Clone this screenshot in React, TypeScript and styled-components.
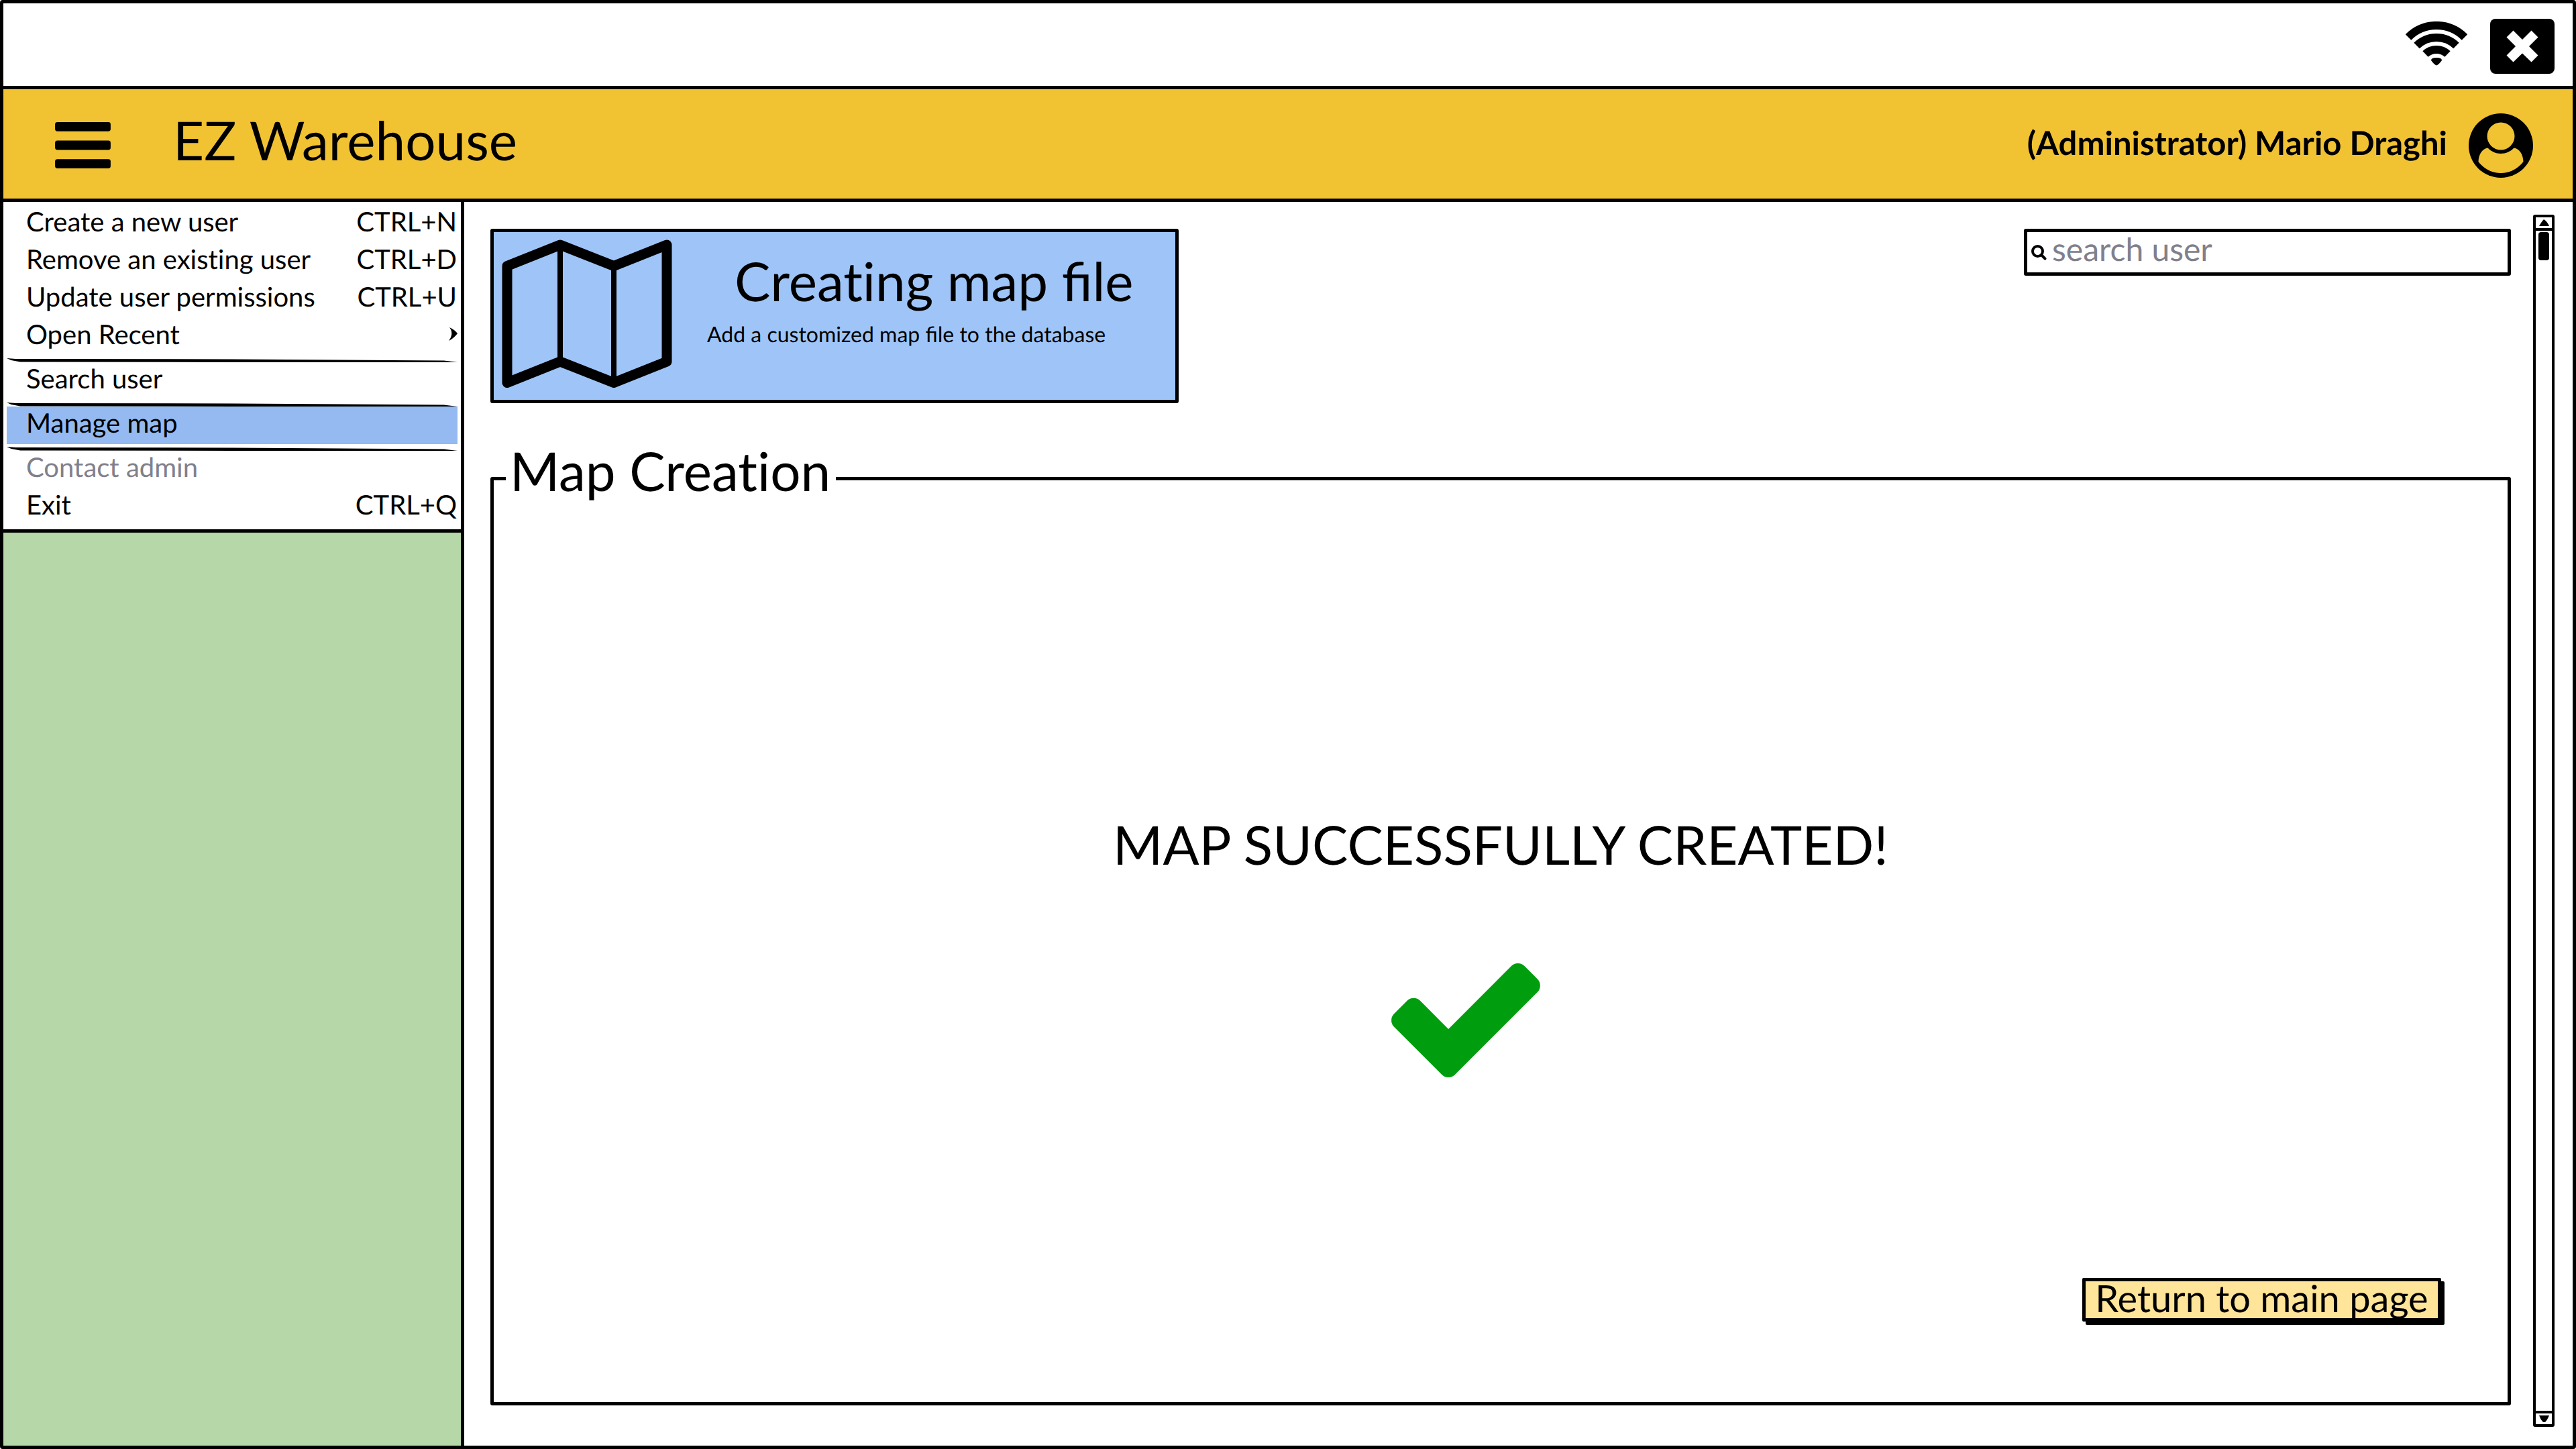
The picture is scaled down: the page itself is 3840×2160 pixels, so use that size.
import React from "react";
import styled, { createGlobalStyle } from "styled-components";

const INK = "#000000";

const GlobalStyle = createGlobalStyle`
  *, *::before, *::after { box-sizing: border-box; }
  body { margin: 0; background: #ffffff; }
  body, button, input {
    font-family: Lato, "Open Sans", sans-serif;
    font-variant-ligatures: no-common-ligatures;
    text-rendering: geometricPrecision;
    color: ${INK};
  }
`;

const Frame = styled.div`
  display: flex;
  flex-direction: column;
  min-height: 100vh;
  border: 5px solid ${INK};
  border-radius: 4px;
`;

const TitleBar = styled.div`
  display: flex;
  align-items: center;
  justify-content: flex-end;
  gap: 34px;
  height: 128px;
  padding: 4px 27px 0 0;
  border-bottom: 5px solid ${INK};
`;

const IconButton = styled.button`
  display: flex;
  padding: 0;
  border: 0;
  background: none;
  cursor: pointer;
`;

const Header = styled.header`
  display: flex;
  align-items: center;
  height: 168px;
  padding: 4px 59px 0 77px;
  background: #f1c232;
  border-bottom: 5px solid ${INK};
`;

const Brand = styled.h1`
  flex: 1;
  margin: 0;
  padding: 0 0 16px 93px;
  font-size: 80px;
  line-height: 96px;
  font-weight: 400;
`;

const Account = styled.div`
  display: flex;
  align-items: center;
  gap: 32px;
`;

const AccountName = styled.span`
  padding-bottom: 8px;
  font-size: 49px;
  line-height: 58px;
  font-weight: 700;
`;

const Columns = styled.div`
  display: flex;
  flex: 1;
`;

const Sidebar = styled.aside`
  flex: none;
  width: 687px;
  background: #b6d7a8;
  border-right: 5px solid ${INK};
`;

const Menu = styled.nav`
  display: flex;
  flex-direction: column;
  padding: 5px;
  background: #ffffff;
  border-bottom: 5px solid ${INK};
`;

const MenuItem = styled.button<{ $active?: boolean }>`
  display: flex;
  justify-content: space-between;
  align-items: center;
  height: 56px;
  padding: 0 0 8px 29px;
  border: 0;
  background: ${(p) => (p.$active ? "#94baf1" : "transparent")};
  font-size: 40px;
  line-height: 48px;
  text-align: left;
  cursor: pointer;

  &:disabled {
    color: #80808c;
    cursor: default;
  }
`;

const Shortcut = styled.span`
  padding-right: 1px;
`;

const Divider = styled.hr`
  width: 100%;
  height: 10px;
  margin: 0;
  border: 0;
  background: ${INK};
  clip-path: polygon(0 40%, 2% 50%, 50% 55%, 97% 75%, 100% 100%, 97% 100%, 50% 100%, 3% 95%, 1% 70%);
`;

const Main = styled.main`
  display: flex;
  flex: 1;
  flex-direction: column;
  padding: 40px 33px 60px 39px;
`;

const TopRow = styled.div`
  display: flex;
  justify-content: space-between;
  align-items: flex-start;
`;

const Card = styled.section`
  display: flex;
  width: 1026px;
  height: 260px;
  padding: 11px 12px;
  background: #9fc5f8;
  border: 5px solid ${INK};
  border-radius: 3px;
`;

const CardText = styled.div`
  flex: 1;
  padding: 14px 0 0 52px;
`;

const CardTitle = styled.h2`
  margin: 0;
  padding-left: 41px;
  font-size: 80px;
  line-height: 96px;
  font-weight: 400;
`;

const CardNote = styled.p`
  margin: 12px 0 0;
  font-size: 32px;
  line-height: 38px;
`;

const Joined = styled.span`
  font-variant-ligatures: common-ligatures;
`;

const SearchBox = styled.label`
  display: flex;
  align-items: center;
  gap: 8px;
  width: 726px;
  height: 70px;
  padding-left: 6px;
  border: 5px solid ${INK};
  border-radius: 3px;
`;

const SearchInput = styled.input`
  flex: 1;
  min-width: 0;
  height: 58px;
  padding: 0 0 8px;
  border: 0;
  outline: 0;
  background: none;
  font-size: 48px;
  line-height: 58px;

  &::placeholder {
    color: #80808c;
    opacity: 1;
  }
`;

const Panel = styled.fieldset`
  display: flex;
  flex: 1;
  flex-direction: column;
  min-width: 0;
  margin: 53px 0 0;
  padding: 0 99px 120px 18px;
  border: 5px solid ${INK};
  border-radius: 3px;
`;

const PanelTitle = styled.legend`
  padding: 0 8px 22px 6px;
  font-size: 80px;
  line-height: 96px;
`;

const Result = styled.div`
  display: flex;
  flex: 1;
  flex-direction: column;
  align-items: center;
  justify-content: center;
  gap: 129px;
  padding: 140px 0 0 81px;
`;

const Message = styled.p`
  margin: 0;
  font-size: 80px;
  line-height: 96px;
`;

const CheckIcon = styled.svg`
  margin-right: 104px;
  fill: #009e0f;
`;

const ReturnButton = styled.button`
  align-self: flex-end;
  width: 535px;
  height: 65px;
  padding: 0 0 6px;
  background: #ffe599;
  border: 5px solid ${INK};
  border-radius: 2px;
  box-shadow: 5px 5px 0 ${INK};
  font-size: 56px;
  line-height: 48px;
  white-space: nowrap;
  cursor: pointer;
`;

const ScrollTrack = styled.div`
  display: flex;
  flex: none;
  flex-direction: column;
  width: 32px;
  margin: 19px 27px 28px 0;
  border: 4px solid ${INK};
  border-radius: 3px;
`;

const ScrollArrow = styled.button<{ $end?: boolean }>`
  display: flex;
  align-items: center;
  justify-content: center;
  height: 20px;
  padding: 0;
  border: 0 solid ${INK};
  border-width: ${(p) => (p.$end ? "4px 0 0" : "0 0 4px")};
  background: #ffffff;
`;

const ScrollSpace = styled.div`
  flex: 1;
  padding: 2px 4px;
`;

const ScrollThumb = styled.div`
  height: 42px;
  border-radius: 4px;
  background: ${INK};
`;

type Entry = { label: string; keys?: string; more?: boolean; active?: boolean; disabled?: boolean };

const GROUPS: Entry[][] = [
  [
    { label: "Create a new user", keys: "CTRL+N" },
    { label: "Remove an existing user", keys: "CTRL+D" },
    { label: "Update user permissions", keys: "CTRL+U" },
    { label: "Open Recent", more: true },
  ],
  [{ label: "Search user" }],
  [{ label: "Manage map", active: true }],
  [
    { label: "Contact admin", disabled: true },
    { label: "Exit", keys: "CTRL+Q" },
  ],
];

export default function App() {
  return (
    <>
      <GlobalStyle />
      <Frame>
        <TitleBar>
          <svg width="92" height="74" viewBox="0 0 92 74" aria-label="Wi-Fi" role="img">
            <g fill="none" stroke={INK} strokeWidth="12">
              <path d="M4 23.500A59 59 0 0 1 88 23.500" />
              <path d="M16.500 36A42 42 0 0 1 75.500 36" />
              <path d="M29.500 48.500A24 24 0 0 1 62.500 48.500" />
            </g>
            <path d="M46 65.500Q43 65 38 58Q38 54 46 54T54 58Q49 65 46 65.500Z" />
          </svg>
          <IconButton aria-label="Close">
            <svg width="96" height="82" viewBox="0 0 96 82">
              <rect width="96" height="82" rx="8" />
              <path
                d="M34.500 17.500L48 31L61.500 17.500L71.500 27.500L58 41L71.500 54.500L61.500 64.500L48 51.500L34.500 64.500L24.500 54.500L38 41L24.500 27.500Z"
                fill="#fff"
              />
            </svg>
          </IconButton>
        </TitleBar>

        <Header>
          <IconButton aria-label="Menu">
            <svg width="83" height="69" viewBox="0 0 1536 1280">
              <rect width="1536" height="256" rx="64" />
              <rect y="512" width="1536" height="256" rx="64" />
              <rect y="1024" width="1536" height="256" rx="64" />
            </svg>
          </IconButton>
          <Brand>EZ Warehouse</Brand>
          <Account>
            <AccountName>(Administrator) Mario Draghi</AccountName>
            <svg width="96" height="96" viewBox="0 0 96 96" aria-hidden="true">
              <circle cx="48" cy="48" r="48" />
              <path
                d="M28.500 51.500C20 53 15 61 14.500 72C23 83 35 89 48 89S73 83 81.500 72C81 61 76 53 67.500 51.500C62 57 56 60 48 60S34 57 28.500 51.500Z"
                fill="#f1c232"
              />
              <circle cx="48" cy="34" r="20.500" fill="#f1c232" />
            </svg>
          </Account>
        </Header>

        <Columns>
          <Sidebar>
            <Menu>
              {GROUPS.map((group, i) => (
                <React.Fragment key={i}>
                  {i > 0 && <Divider />}
                  {group.map((item) => (
                    <MenuItem key={item.label} $active={item.active} disabled={item.disabled}>
                      <span>{item.label}</span>
                      {item.keys && <Shortcut>{item.keys}</Shortcut>}
                      {item.more && (
                        <svg width="13" height="20" viewBox="0 0 13 20" aria-hidden="true">
                          <path d="M1 0Q8 3 13 9Q8 16 0 20Q8 9 1 0Z" />
                        </svg>
                      )}
                    </MenuItem>
                  ))}
                </React.Fragment>
              ))}
            </Menu>
          </Sidebar>

          <Main>
            <TopRow>
              <Card>
                <svg width="254" height="222" viewBox="0 0 254 222" aria-hidden="true">
                  <path
                    d="M8 39.500L87 8L167 39.500L246 8V182L167 213.500L87 182L8 213.500Z"
                    fill="none"
                    stroke={INK}
                    strokeWidth="15"
                    strokeLinejoin="round"
                  />
                  <path d="M87 8V182M167 39V213" stroke={INK} strokeWidth="8" />
                </svg>
                <CardText>
                  <CardTitle>
                    Creating map <Joined>file</Joined>
                  </CardTitle>
                  <CardNote>
                    Add a customized map <Joined>file</Joined> to the database
                  </CardNote>
                </CardText>
              </Card>
              <SearchBox>
                <svg width="23" height="23" viewBox="0 0 23 23" fill="none" stroke={INK} aria-hidden="true">
                  <circle cx="9.500" cy="9.500" r="7.500" strokeWidth="4" />
                  <path d="M15 15L20.500 20.500" strokeWidth="4" strokeLinecap="round" />
                </svg>
                <SearchInput type="search" placeholder="search user" aria-label="search user" />
              </SearchBox>
            </TopRow>

            <Panel>
              <PanelTitle>Map Creation</PanelTitle>
              <Result>
                <Message>MAP SUCCESSFULLY CREATED!</Message>
                <CheckIcon width="222" height="170" viewBox="121 334 1550 1188" role="img" aria-label="Success">
                  <path d="M1671 566q0 40-28 68l-724 724-136 136q-28 28-68 28t-68-28l-136-136-362-362q-28-28-28-68t28-68l136-136q28-28 68-28t68 28l294 295 656-657q28-28 68-28t68 28l136 136q28 28 28 68z" />
                </CheckIcon>
              </Result>
              <ReturnButton>Return to main page</ReturnButton>
            </Panel>
          </Main>

          <ScrollTrack>
            <ScrollArrow aria-label="Scroll up">
              <svg width="15" height="10" viewBox="0 0 15 10">
                <path d="M0 10Q4 3 7 0Q12 3 15 10Z" />
              </svg>
            </ScrollArrow>
            <ScrollSpace>
              <ScrollThumb />
            </ScrollSpace>
            <ScrollArrow $end aria-label="Scroll down">
              <svg width="15" height="10" viewBox="0 0 15 10">
                <path d="M0 0H15Q12 7 9 10H6Q2 6 0 0Z" />
              </svg>
            </ScrollArrow>
          </ScrollTrack>
        </Columns>
      </Frame>
    </>
  );
}
